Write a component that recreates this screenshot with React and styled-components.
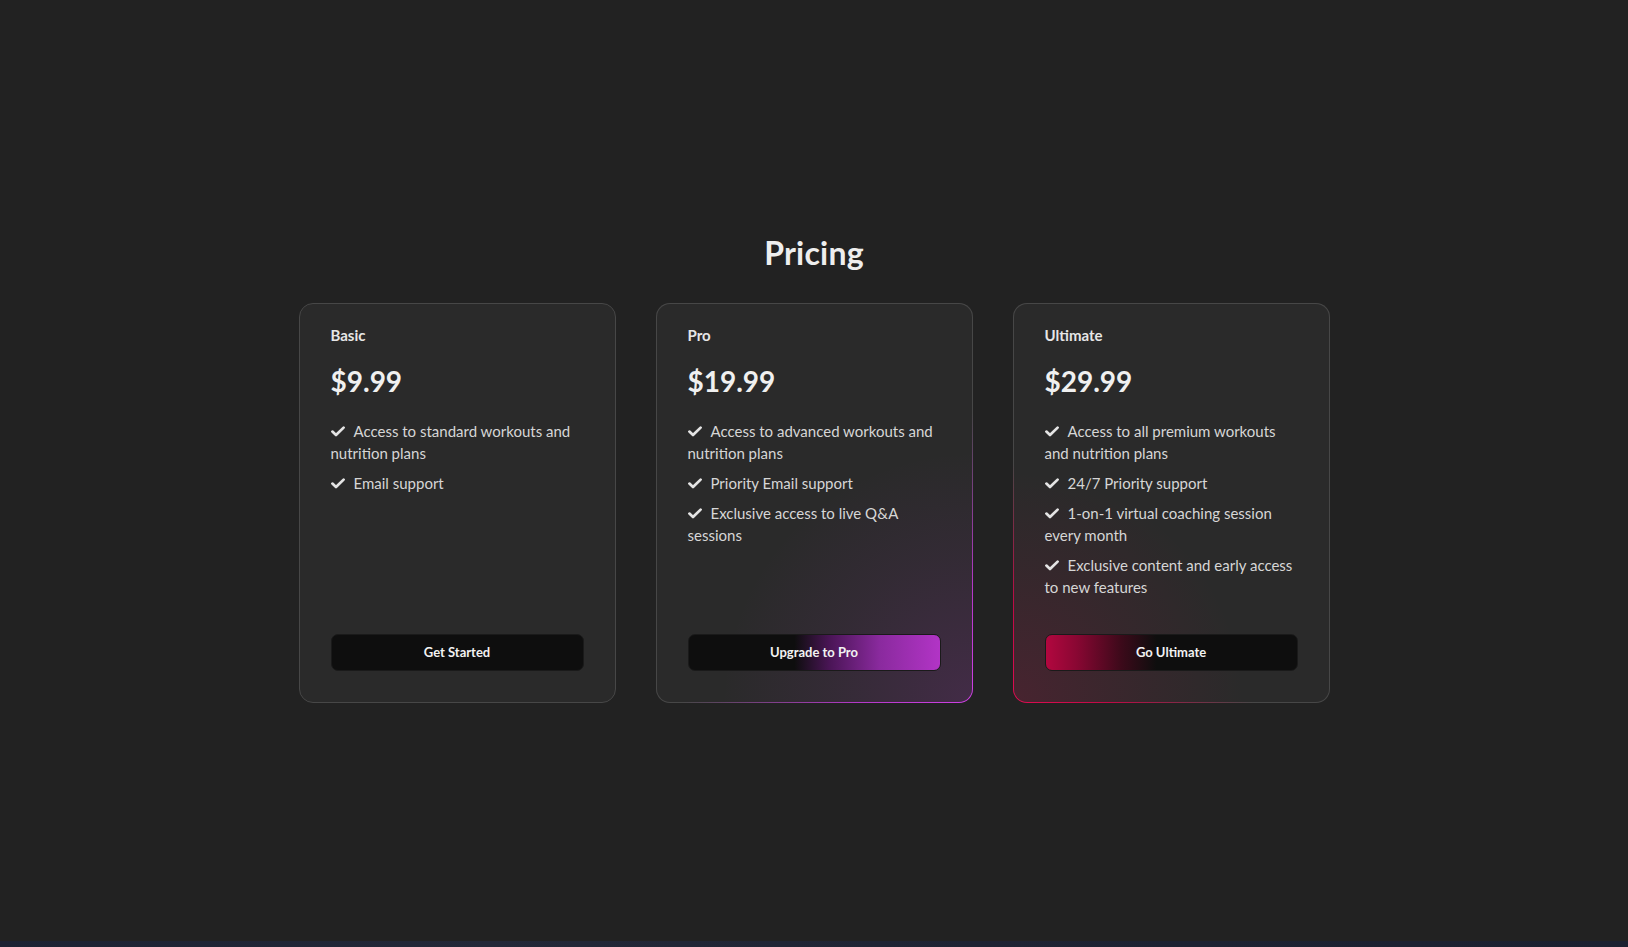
import styled, { createGlobalStyle, css } from 'styled-components';

const GlobalStyle = createGlobalStyle`
  * { box-sizing: border-box; }
  body {
    margin: 0;
    background: #222222;
    font-family: Lato, "Open Sans", sans-serif;
    color: #ececec;
  }
`;

const plans = [
  {
    name: 'Basic',
    price: '$9.99',
    features: ['Access to standard workouts and nutrition plans', 'Email support'],
    cta: 'Get Started',
    accent: 'none',
  },
  {
    name: 'Pro',
    price: '$19.99',
    features: [
      'Access to advanced workouts and nutrition plans',
      'Priority Email support',
      'Exclusive access to live Q&A sessions',
    ],
    cta: 'Upgrade to Pro',
    accent: 'pro',
  },
  {
    name: 'Ultimate',
    price: '$29.99',
    features: [
      'Access to all premium workouts and nutrition plans',
      '24/7 Priority support',
      '1-on-1 virtual coaching session every month',
      'Exclusive content and early access to new features',
    ],
    cta: 'Go Ultimate',
    accent: 'ultimate',
  },
];

const Check = () => (
  <CheckIcon viewBox="0 0 14 11" aria-hidden="true">
    <path d="M1.4 5.6 L5 9 L12.6 1.6" fill="none" stroke="currentColor" strokeWidth="2.7" strokeLinecap="round" strokeLinejoin="round" />
  </CheckIcon>
);

const App = () => (
  <>
    <GlobalStyle />
    <Section>
      <Title>Pricing</Title>
      <Cards>
        {plans.map(plan => (
          <Card key={plan.name} accent={plan.accent}>
            <PlanName>{plan.name}</PlanName>
            <Price>{plan.price}</Price>
            <Features>
              {plan.features.map(f => (
                <Feature key={f}>
                  <Check />
                  {f}
                </Feature>
              ))}
            </Features>
            <CtaButton accent={plan.accent}>{plan.cta}</CtaButton>
          </Card>
        ))}
      </Cards>
    </Section>
    <NextStrip />
  </>
);

const Section = styled.section`
  height: 941px;
  display: flex;
  flex-direction: column;
  align-items: center;
  justify-content: center;
  gap: 30px;
  padding-bottom: 6px;
`;

const Title = styled.h2`
  margin: 0;
  font-size: 32px;
  font-weight: 700;
  line-height: 40px;
  color: #eeeeee;
  letter-spacing: 0.2px;
`;

const Cards = styled.div`
  display: grid;
  grid-template-columns: repeat(3, 317px);
  gap: 40px;
`;

const accentCard = {
  none: css`
    border: 1px solid #474747;
    background: #2a2a2a;
  `,
  pro: css`
    border: 1px solid transparent;
    background:
      radial-gradient(circle 250px at 100% 100%, rgba(165, 50, 185, 0.2), rgba(165, 50, 185, 0.07) 60%, transparent 100%) padding-box,
      linear-gradient(#2a2a2a, #2a2a2a) padding-box,
      radial-gradient(circle 290px at 100% 100%, #d040e6 0%, #b438c8 40%, #474747 100%) border-box;
  `,
  ultimate: css`
    border: 1px solid transparent;
    background:
      radial-gradient(circle 230px at 0% 100%, rgba(190, 10, 70, 0.2), rgba(190, 10, 70, 0.07) 60%, transparent 100%) padding-box,
      linear-gradient(#2a2a2a, #2a2a2a) padding-box,
      radial-gradient(circle 240px at 0% 100%, #e00c52 0%, #c00a46 40%, #474747 100%) border-box;
  `,
};

const Card = styled.div`
  height: 400px;
  border-radius: 14px;
  padding: 20px 31px 31px;
  display: flex;
  flex-direction: column;
  ${p => accentCard[p.accent]}
`;

const PlanName = styled.div`
  font-size: 15px;
  font-weight: 700;
  line-height: 22px;
  color: #e6e6e6;
`;

const Price = styled.div`
  margin-top: 18px;
  font-size: 28px;
  font-weight: 700;
  line-height: 34px;
  color: #f0f0f0;
`;

const Features = styled.ul`
  list-style: none;
  margin: 22px 0 0;
  padding: 0;
  display: flex;
  flex-direction: column;
  gap: 8px;
  flex: 1;
`;

const Feature = styled.li`
  font-size: 15px;
  line-height: 22px;
  color: #d6d6d6;
`;

const CheckIcon = styled.svg`
  width: 14px;
  height: 11px;
  margin-right: 9px;
  color: #e4e4e4;
  vertical-align: -0.5px;
`;

const buttonAccent = {
  none: css`
    background: #0e0e0e;
  `,
  pro: css`
    background: linear-gradient(90deg, #0e0e0e 0%, #0e0e0e 42%, #4a1556 56%, #8a2a9e 76%, #b234c6 100%);
  `,
  ultimate: css`
    background: linear-gradient(90deg, #b2073f 0%, #8a0733 12%, #3c0a1a 30%, #0e0e0e 44%, #0e0e0e 100%);
  `,
};

const CtaButton = styled.button`
  height: 37px;
  width: 100%;
  border: 1px solid #1a1a1a;
  border-radius: 7px;
  color: #f2f2f2;
  font-family: inherit;
  font-size: 13px;
  font-weight: 700;
  cursor: pointer;
  ${p => buttonAccent[p.accent]}
`;

const NextStrip = styled.div`
  height: 6px;
  background: linear-gradient(90deg, #1c2233, #232838 30%, #1e2333 60%, #1b2030);
`;

export default App;
